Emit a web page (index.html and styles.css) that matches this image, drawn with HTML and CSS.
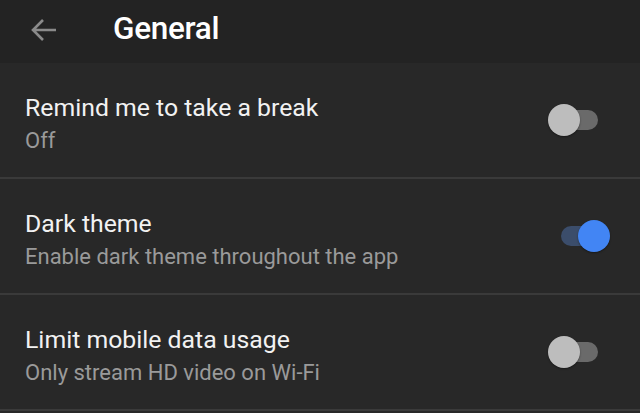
FILE: index.html
```html
<!DOCTYPE html>
<html lang="en">
<head>
    <meta charset="UTF-8">
    <title>General</title>
    <link rel="stylesheet" href="styles.css">
</head>
<body>
    <header class="top-bar">
        <svg class="back-icon" width="28" height="24" viewBox="0 0 28 24">
            <path d="M26 12H3M13 2L3 12l10 10" fill="none" stroke="#8a8a8a" stroke-width="2.6"/>
        </svg>
        <h1>General</h1>
    </header>

    <div class="setting">
        <div class="setting-text">
            <div class="setting-title">Remind me to take a break</div>
            <div class="setting-sub">Off</div>
        </div>
        <div class="switch"><span class="track"></span><span class="knob"></span></div>
    </div>

    <div class="setting">
        <div class="setting-text">
            <div class="setting-title">Dark theme</div>
            <div class="setting-sub">Enable dark theme throughout the app</div>
        </div>
        <div class="switch on"><span class="track"></span><span class="knob"></span></div>
    </div>

    <div class="setting">
        <div class="setting-text">
            <div class="setting-title">Limit mobile data usage</div>
            <div class="setting-sub">Only stream HD video on Wi-Fi</div>
        </div>
        <div class="switch"><span class="track"></span><span class="knob"></span></div>
    </div>
</body>
</html>
```

FILE: styles.css
```css
body {
    margin: 0;
    font-family: Roboto, "Liberation Sans", sans-serif;
    background-color: #282828;
    color: #fff;
}

.top-bar {
    display: flex;
    align-items: center;
    height: 63px;
    background-color: #232323;
    padding-left: 30px;
}

.back-icon {
    margin-top: -4px;
}

.top-bar h1 {
    margin: -6px 0 0 55px;
    font-size: 31.5px;
    font-weight: 500;
    letter-spacing: -0.3px;
}

.setting {
    display: flex;
    align-items: center;
    height: 114px;
    padding: 0 30px 0 25px;
    border-bottom: 2px solid #3a3a3a;
}

.setting-text {
    flex: 1;
    margin-top: 7px;
}

.setting-title {
    font-size: 24.8px;
    line-height: 32px;
    color: #f2f2f2;
}

.setting-sub {
    font-size: 22px;
    line-height: 28px;
    margin-top: 3px;
    color: #9a9a9a;
}

.switch {
    position: relative;
    width: 62px;
    height: 32px;
}

.track {
    position: absolute;
    left: 13px;
    right: 12px;
    top: 6px;
    height: 20px;
    border-radius: 10px;
    background-color: #6a6a6a;
}

.knob {
    position: absolute;
    left: 0;
    top: 0;
    width: 32px;
    height: 32px;
    border-radius: 50%;
    background-color: #bdbdbd;
    box-shadow: 0 1px 2px rgba(0, 0, 0, 0.4);
}

.switch.on .track {
    background-color: #3b4d6b;
}

.switch.on .knob {
    left: auto;
    right: 0;
    background-color: #4285f4;
}
```
